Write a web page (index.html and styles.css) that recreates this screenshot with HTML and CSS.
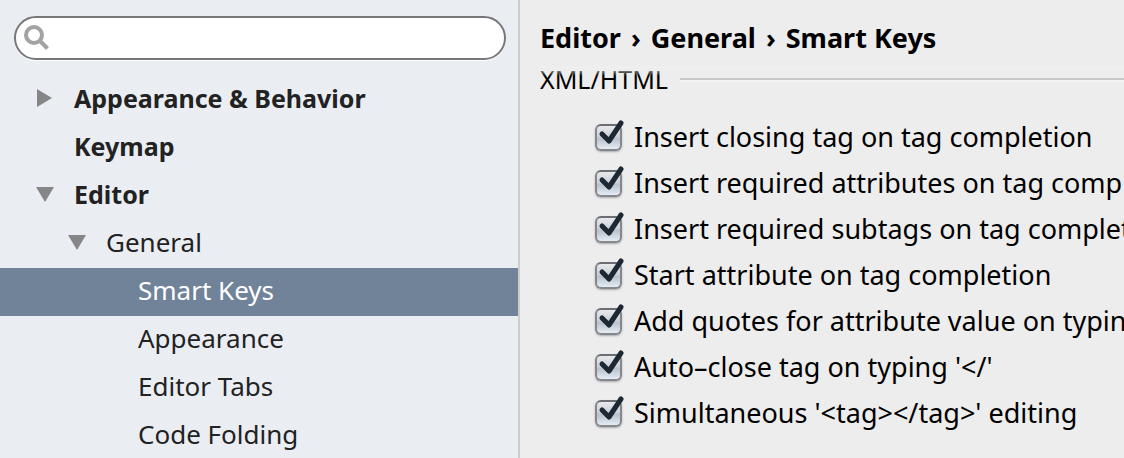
FILE: index.html
```
<!DOCTYPE html>
<html lang="en">
<head>
<meta charset="utf-8">
<title>Preferences</title>
<link rel="stylesheet" href="styles.css">
</head>
<body>
<div class="window">
  <aside class="sidebar">
    <label class="search">
      <svg class="search-icon" viewBox="0 0 26 26" aria-hidden="true"><circle cx="10" cy="10" r="8" fill="none" stroke="#a3a3a3" stroke-width="4"/><path d="M15.5 15.5 23.5 23.5" stroke="#a3a3a3" stroke-width="4"/></svg>
      <input class="search-input" type="text" aria-label="Search settings">
    </label>
    <nav class="tree">
      <div class="node top"><button class="toggle" aria-label="Expand Appearance &amp; Behavior"><svg viewBox="0 0 18 18"><path d="M1 0 16 9 1 18z"/></svg></button><a href="#appearance-behavior">Appearance &amp; Behavior</a></div>
      <div class="node top leaf"><a href="#keymap">Keymap</a></div>
      <div class="node top"><button class="toggle" aria-label="Collapse Editor"><svg viewBox="0 0 18 18"><path d="M0 2H18L9 17z"/></svg></button><a href="#editor">Editor</a></div>
      <div class="node second"><button class="toggle" aria-label="Collapse General"><svg viewBox="0 0 18 18"><path d="M0 2H18L9 17z"/></svg></button><a href="#general">General</a></div>
      <div class="node third selected"><a href="#smart-keys" aria-current="page">Smart Keys</a></div>
      <div class="node third"><a href="#appearance">Appearance</a></div>
      <div class="node third"><a href="#editor-tabs">Editor Tabs</a></div>
      <div class="node third"><a href="#code-folding">Code Folding</a></div>
    </nav>
  </aside>
  <main class="content">
    <h1 class="crumbs"><span>Editor</span><span class="sep">›</span><span>General</span><span class="sep">›</span><span>Smart Keys</span></h1>
    <fieldset class="group">
      <legend class="group-title">XML/HTML</legend>
      <label class="option"><span class="check"><input type="checkbox" checked><svg viewBox="0 0 32 36"><path d="M7 15 14 22 26 4"/></svg></span>Insert closing tag on tag completion</label>
      <label class="option"><span class="check"><input type="checkbox" checked><svg viewBox="0 0 32 36"><path d="M7 15 14 22 26 4"/></svg></span>Insert required attributes on tag completion</label>
      <label class="option"><span class="check"><input type="checkbox" checked><svg viewBox="0 0 32 36"><path d="M7 15 14 22 26 4"/></svg></span>Insert required subtags on tag completion</label>
      <label class="option"><span class="check"><input type="checkbox" checked><svg viewBox="0 0 32 36"><path d="M7 15 14 22 26 4"/></svg></span>Start attribute on tag completion</label>
      <label class="option"><span class="check"><input type="checkbox" checked><svg viewBox="0 0 32 36"><path d="M7 15 14 22 26 4"/></svg></span>Add quotes for attribute value on typing</label>
      <label class="option"><span class="check"><input type="checkbox" checked><svg viewBox="0 0 32 36"><path d="M7 15 14 22 26 4"/></svg></span>Auto–close tag on typing '&lt;/'</label>
      <label class="option"><span class="check"><input type="checkbox" checked><svg viewBox="0 0 32 36"><path d="M7 15 14 22 26 4"/></svg></span>Simultaneous '&lt;tag&gt;&lt;/tag&gt;' editing</label>
    </fieldset>
  </main>
</div>
</body>
</html>
```
FILE: styles.css
```
* { box-sizing: border-box; }
body {
  margin: 0;
  font: 26px "Lucida Grande", "Noto Sans", "Open Sans", sans-serif;
  color: #000;
  background: #ededed;
}
.window {
  display: grid;
  grid-template-columns: minmax(0, 520fr) minmax(0, 604fr);
  height: 100vh;
  overflow: hidden;
}
.sidebar {
  background: #eaeef3;
  border-right: 2px solid #cdcdcd;
  padding-top: 16px;
  overflow: hidden;
}
.search {
  display: flex;
  align-items: center;
  height: 44px;
  margin: 0 12px 16px 14px;
  padding: 0 16px 0 8px;
  background: #fff;
  border: 2px solid #767779;
  border-radius: 22px;
  box-shadow: 0 1px 0 #fff;
}
.search-icon { width: 26px; height: 26px; flex: none; }
.search-input {
  flex: 1;
  min-width: 0;
  border: 0;
  outline: 0;
  background: transparent;
  font: inherit;
}
.node {
  display: flex;
  align-items: center;
  gap: 20px;
  height: 48px;
  padding-bottom: 4px;
  color: #222;
  white-space: nowrap;
}
.node a { color: inherit; text-decoration: none; line-height: 44px; }
.top { padding-left: 36px; font-size: 25px; font-weight: 700; }
.leaf { padding-left: 74px; }
.second { padding-left: 68px; }
.third { padding-left: 138px; }
.selected { background: #718399; color: #fff; }
.toggle {
  flex: none;
  width: 18px;
  height: 18px;
  padding: 0;
  border: 0;
  background: none;
}
.toggle svg { display: block; width: 18px; height: 18px; fill: #868686; }
.content { min-width: 0; padding-left: 20px; overflow: hidden; }
.crumbs {
  position: relative;
  z-index: 1;
  display: flex;
  gap: 10px;
  margin: 0;
  height: 66px;
  padding-top: 20px;
  line-height: 36px;
  font-size: 27px;
  white-space: nowrap;
  background: #ededed;
}
.crumbs::after {
  content: "";
  position: absolute;
  top: 100%;
  left: 0;
  right: 0;
  height: 10px;
  background: linear-gradient(#efefef, #ededed00);
}
.group { margin: 0; padding: 0; border: 0; min-width: 0; }
.group-title {
  display: flex;
  align-items: center;
  gap: 12px;
  width: 100%;
  height: 26px;
  margin-bottom: 22px;
  padding: 0;
  font-size: 25px;
  line-height: 26px;
}
.group-title::after {
  content: "";
  flex: 1;
  height: 2px;
  background: #c8c8c8;
  box-shadow: 0 2px 0 #f4f4f4;
}
.option {
  display: flex;
  align-items: center;
  gap: 7px;
  height: 46px;
  padding-left: 55px;
  font-size: 27px;
  line-height: 46px;
  white-space: nowrap;
}
.check { display: grid; flex: none; width: 32px; height: 36px; }
.check > * { grid-area: 1 / 1; }
.check input {
  appearance: none;
  align-self: center;
  width: 27px;
  height: 27px;
  margin: 0;
  border: 2px solid #85878b;
  border-top-color: #6c6e73;
  border-radius: 6px;
  background: linear-gradient(#e8eaec, #ccd1d8 45%, #b9c2cc 55%, #e4edf4);
  box-shadow: 0 1px 2px #aaa;
}
.check svg {
  width: 32px;
  height: 36px;
  fill: none;
  stroke: #1d2835;
  stroke-width: 5;
  stroke-linecap: round;
  stroke-linejoin: round;
  pointer-events: none;
}
.check input:not(:checked) + svg { visibility: hidden; }
```
